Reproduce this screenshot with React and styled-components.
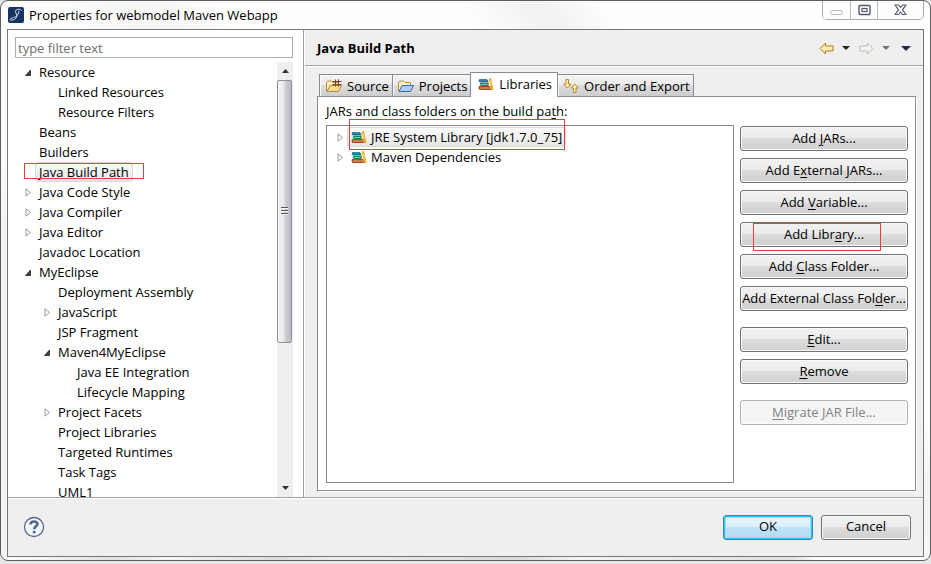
import React from "react";
import styled, { createGlobalStyle, css } from "styled-components";

const Global = createGlobalStyle`
  *, *::before, *::after { box-sizing: border-box; }
  body {
    margin: 0;
    background: #e4e6e7;
    color: #000;
    font: 13px/20px "Open Sans", "Noto Sans", sans-serif;
  }
  button, input { font: inherit; color: inherit; }
  ul { list-style: none; margin: 0; padding: 0; }
  svg { display: block; flex: none; }
  u { text-underline-offset: 2px; }
`;

const Page = styled.div`
  height: 100vh;
  min-height: 540px;
  padding-bottom: 3px;
  display: flex;
`;

const Window = styled.main`
  flex: 1;
  min-width: 0;
  display: flex;
  flex-direction: column;
  padding: 0 6px 3px;
  border: 1px solid #5f5f62;
  border-radius: 8px;
  background:
    linear-gradient(90deg, #fff, #e2e2e2 12%, #f6f6f6 18%, #dcdcdc 30%, #eee 36%, #dadada 55%, #f4f4f4 62%, #e0e0e0 85%, #fff 88%) bottom / 100% 3px no-repeat,
    linear-gradient(52deg, #f4f4f4 0 20%, #fcfcfc 24% 36%, #f7f7f7 40% 44%, #fefefe 48% 65%, #f3f3f3 70% 72%, #fefefe 76%);
`;

const TitleBar = styled.header`
  height: 28px;
  flex: none;
  display: flex;
  align-items: center;
  gap: 5px;
  padding-left: 1px;
`;

const Title = styled.h1`
  flex: 1;
  margin: 0;
  font-size: 13px;
  font-weight: 400;
`;

const WindowControls = styled.div`
  align-self: flex-start;
  height: 19px;
  display: flex;
  border: 1px solid #aaacb0;
  border-top: 0;
  border-radius: 0 0 5px 5px;
  overflow: hidden;
`;

const WindowButton = styled.button`
  width: ${(p) => (p.$wide ? 46 : 27)}px;
  padding: 0;
  border: 0;
  background: #fdfdfd;
  display: grid;
  place-items: center;
  & + & { border-left: 1px solid #b8babd; }
`;

const Client = styled.div`
  flex: 1;
  min-height: 0;
  display: flex;
  flex-direction: column;
  border: 1px solid #777;
  background: #efefef;
`;

const Columns = styled.div`
  flex: 1;
  min-height: 0;
  display: flex;
`;

const Sidebar = styled.nav`
  width: 296px;
  flex: none;
  padding: 7px 10px 0 7px;
  display: flex;
  flex-direction: column;
  gap: 4px;
  background: #fff;
  border-right: 1px solid #a0a0a0;
`;

const FilterInput = styled.input`
  width: 100%;
  height: 21px;
  padding: 0 2px;
  border: 1px solid #abadb3;
  background: #fff;
  outline: none;
  &::placeholder { color: #6d6d6d; opacity: 1; }
`;

const TreeArea = styled.div`
  flex: 1;
  min-height: 0;
  display: flex;
`;

const Tree = styled.ul`
  flex: 1;
  overflow: hidden;
`;

const TreeRow = styled.li`
  height: 20px;
  display: flex;
  align-items: center;
  padding-left: ${(p) => 8 + p.$level * 19}px;
`;

const Twisty = styled.span`
  width: 12px;
  flex: none;
  display: flex;
  padding-left: 2px;
`;

const TreeLabel = styled.span`
  position: relative;
  height: 20px;
  line-height: 18px;
  padding: 0 3px;
  border: 1px solid transparent;
  border-radius: 3px;
  white-space: nowrap;
  display: flex;
  align-items: center;
  gap: 4px;
  ${(p) => p.$selected && css`
    border-color: #d9d9d9;
    background: linear-gradient(#fafafa, #e6e6e6);
  `}
`;

const Mark = styled.span`
  position: absolute;
  border: 1px solid #f23c3c;
  pointer-events: none;
  inset: ${(p) => p.$inset};
`;

const ScrollBar = styled.div`
  width: 16px;
  display: flex;
  flex-direction: column;
  align-items: center;
  background: #efefef;
`;

const ScrollButton = styled.button`
  width: 16px;
  height: 18px;
  flex: none;
  padding: 0;
  border: 0;
  background: transparent;
  display: grid;
  place-items: center;
`;

const ScrollTrack = styled.div`
  flex: 1;
  width: 100%;
`;

const ScrollThumb = styled.div`
  width: 15px;
  height: 66%;
  display: grid;
  place-items: center;
  border: 1px solid #8e8f93;
  border-radius: 2px;
  background: linear-gradient(90deg, #f5f5f5, #e8e8ea 45%, #cbcbd0 60%, #bdbec4);
`;

const Content = styled.section`
  flex: 1;
  min-width: 0;
  display: flex;
  flex-direction: column;
  border-left: 1px solid #fff;
`;

const ContentHeader = styled.div`
  height: 36px;
  flex: none;
  display: flex;
  align-items: center;
  justify-content: space-between;
  padding: 1px 9px 0 12px;
  border-bottom: 1px solid #a0a0a0;
  box-shadow: 0 1px #fff;
`;

const Heading = styled.h2`
  margin: 0;
  font-size: 13px;
  font-weight: 700;
`;

const NavTools = styled.div`
  display: flex;
  align-items: center;
`;

const ToolButton = styled.button`
  width: ${(p) => (p.$narrow ? 24 : 16)}px;
  height: 20px;
  padding: 0;
  border: 0;
  background: none;
  display: grid;
  place-items: center;
`;

const ContentBody = styled.div`
  flex: 1;
  min-height: 0;
  display: flex;
  flex-direction: column;
  padding: 6px 7px 6px 12px;
`;

const TabList = styled.div`
  display: flex;
  align-items: flex-end;
  padding-left: 2px;
`;

const Tab = styled.button`
  height: 22px;
  padding: 0 3px 0 6px;
  display: flex;
  align-items: center;
  gap: 5px;
  white-space: nowrap;
  border: 1px solid #898c95;
  border-bottom: 0;
  background: linear-gradient(#f3f3f3, #ebebeb 50%, #dddddd 50%, #cdcdcd);
  box-shadow: inset 1px 1px #fbfbfb;
  & + & { border-left: 0; padding-left: 5px; }
  ${(p) => p.$active && css`
    height: 25px;
    margin-bottom: -1px;
    position: relative;
    background: #fff;
    && {
      padding: 0 5px 2px 7px;
      border-left: 1px solid #898c95;
      margin-left: -1px;
    }
  `}
`;

const TabPanel = styled.div`
  flex: 1;
  min-height: 0;
  display: grid;
  grid-template: 28px minmax(0, 1fr) / minmax(0, 1fr) 168px;
  column-gap: 6px;
  padding: 0 7px 7px 8px;
  border: 1px solid #898c95;
  background: #fff;
  box-shadow: 1px 1px #fff;
`;

const PanelCaption = styled.div`
  grid-column: 1 / -1;
  padding-top: 4px;
`;

const EntryTree = styled.ul`
  padding-top: 1px;
  border: 1px solid #828790;
`;

const EntryRow = styled.li`
  height: 20px;
  display: flex;
  align-items: center;
  padding-left: 8px;
`;

const ActionColumn = styled.div`
  display: flex;
  flex-direction: column;
  gap: 16px;
  padding-top: 1px;
`;

const ActionGroup = styled.div`
  display: flex;
  flex-direction: column;
  gap: 7px;
`;

const PushButton = styled.button`
  position: relative;
  height: 25px;
  padding: 0 0 2px;
  white-space: nowrap;
  border: 1px solid #707070;
  border-radius: 3px;
  background: linear-gradient(#f2f2f2, #ebebeb 50%, #dddddd 50%, #cfcfcf);
  box-shadow: inset 0 0 0 1px #fafafa;
  &:disabled {
    color: #838383;
    border-color: #adb2b5;
    background: #f4f4f4;
  }
  ${(p) => p.$primary && css`
    border-color: #3c7fb1;
    background: linear-gradient(#e9f5fc, #d9effb 50%, #c0e3f8 50%, #b0dbf5);
    box-shadow: inset 0 0 0 1px #2cc9fa, inset 0 0 0 2px #8fe0fb;
  `}
`;

const Footer = styled.footer`
  height: 59px;
  flex: none;
  display: flex;
  align-items: center;
  justify-content: space-between;
  padding: 0 12px 0 15px;
  border-top: 1px solid #a0a0a0;
  box-shadow: inset 0 1px #fff;
`;

const HelpButton = styled.button`
  padding: 0;
  border: 0;
  background: none;
`;

const DialogActions = styled.div`
  display: grid;
  grid-template-columns: 90px 90px;
  gap: 8px;
`;

const AppIcon = () => (
  <svg width="16" height="16" viewBox="0 0 16 16">
    <rect width="16" height="16" rx="2" fill="#17335f" />
    <path d="M13.500 3.500C12 1.500 7.500 2 7.500 4.500C7.500 6.500 9.500 7.500 8.500 10C7.500 13 3 14 2 12.500C2 11 6 11.500 9 8.500C11 6.500 11.500 4.500 10 4" fill="none" stroke="#cfe0f5" strokeWidth="1" />
  </svg>
);

const TwistyIcon = ({ open }) => (
  <svg width="7" height="9" viewBox="0 0 7 9">
    {open
      ? <path d="M5.500 2V7.500H.5Z" fill="#404040" stroke="#222" strokeWidth=".8" />
      : <path d="M1 .8V8.200L5.500 4.500Z" fill="#fff" stroke="#989898" />}
  </svg>
);

const BooksIcon = () => (
  <svg width="16" height="16" viewBox="0 0 16 16">
    <path d="M11 2.500L13 2L15.500 14H13Z" fill="#f5a81c" />
    <path d="M11.500 3L9.500 12" fill="none" stroke="#f2b23a" />
    <path d="M12.300 4.500L13.300 9" stroke="#fbe08a" />
    <path d="M1.500 3H8.500L10 4.500V6.500H2L.5 5Z" fill="#14708f" />
    <path d="M2 4H8.500" stroke="#41a9bd" />
    <path d="M2.500 7H10.500V10H3L1.500 8.500Z" fill="#128462" />
    <path d="M3 8.500H9.500" stroke="#79cfa5" />
    <path d="M1 10H12L13 14H1.500L.5 12Z" fill="#a64b20" />
    <path d="M2 12H12" stroke="#eab47d" />
  </svg>
);

const FolderIcon = ({ front, line, back, grid }) => (
  <svg width="16" height="16" viewBox="0 0 16 16">
    <path d="M.5 13V4.500L2 3H5.500L7 4.500H12.500V7.500" fill={back} stroke="#bb8a35" />
    <path d="M1 13.500L4 7.500H15.500L12.500 13.500Z" fill={front} stroke={line} />
    {grid && <path d="M6.500 3.500H15.500M6.500 6.500H15.500M9.500 1.500V8.500M12.500 1.500V8.500" stroke="#7c4328" />}
  </svg>
);

const OrderIcon = () => (
  <svg width="16" height="16" viewBox="0 0 16 16" fill="#fdeeb5" stroke="#bd861f">
    <path d="M3 1.500H5.500V6H8L4.300 10L.6 6H3Z" />
    <path d="M10.500 14.500H13V10H15.400L11.700 6L8 10H10.500Z" />
  </svg>
);

const ArrowIcon = ({ forward }) => (
  <svg width="15" height="13" viewBox="0 0 15 13">
    <path
      d={forward
        ? "M14 6.500L8.500 1V4H1V9H8.500V12Z"
        : "M1 6.500L6.500 1V4H14V9H6.500V12Z"}
      fill={forward ? "#f4f4f1" : "#fdedb0"}
      stroke={forward ? "#bcbcb5" : "#b87a16"}
    />
  </svg>
);

const CaretIcon = ({ color, wide }) => (
  <svg width={wide ? 10 : 8} height={wide ? 5 : 4} viewBox="0 0 8 4">
    <path d="M0 0H8L4 4Z" fill={color} />
  </svg>
);

const ScrollArrow = ({ up }) => (
  <svg width="7" height="4" viewBox="0 0 7 4">
    <path d={up ? "M0 4L3.500 0L7 4Z" : "M0 0H7L3.500 4Z"} fill="#333" />
  </svg>
);

const GripIcon = () => (
  <svg width="7" height="9" viewBox="0 0 7 9">
    <path d="M0 .5H7M0 3.500H7M0 6.500H7" stroke="#55565a" />
    <path d="M0 1.500H7M0 4.500H7M0 7.500H7" stroke="#f4f4f4" />
  </svg>
);

const HelpIcon = () => (
  <svg width="22" height="22" viewBox="0 0 22 22" fill="none" stroke="#566a8e">
    <circle cx="11" cy="11" r="9.500" fill="#f5f6f8" strokeWidth="1.300" />
    <path d="M7.500 8.500C7.500 4.500 14.500 4.500 14.500 8C14.500 10.300 11.200 10.400 11.200 13.200" strokeWidth="2.600" />
    <path d="M11.200 14.800V17.300" strokeWidth="2.800" />
  </svg>
);

const MinimizeIcon = () => (
  <svg width="13" height="13" viewBox="0 0 13 13">
    <rect x="1" y="6.500" width="11" height="4" rx="1" fill="#fff" stroke="#bbb" />
  </svg>
);

const MaximizeIcon = () => (
  <svg width="13" height="12" viewBox="0 0 13 12" fill="#fff" stroke="#53566b">
    <rect x="1" y="1.500" width="11" height="9" rx="1" strokeWidth="1.400" />
    <rect x="4" y="4.500" width="5" height="3" strokeWidth="1.200" />
  </svg>
);

const CloseIcon = () => (
  <svg width="13" height="12" viewBox="0 0 13 12">
    <path d="M1 1H4.500L6.500 3.500L8.500 1H12L8.500 5.800L12 10.500H8.500L6.500 8L4.500 10.500H1L4.500 5.800Z" fill="#fff" stroke="#53566b" strokeWidth="1.200" strokeLinejoin="round" />
  </svg>
);

const pages = [
  { label: "Resource", level: 0, open: true },
  { label: "Linked Resources", level: 1 },
  { label: "Resource Filters", level: 1 },
  { label: "Beans", level: 0 },
  { label: "Builders", level: 0 },
  { label: "Java Build Path", level: 0, selected: true },
  { label: "Java Code Style", level: 0, open: false },
  { label: "Java Compiler", level: 0, open: false },
  { label: "Java Editor", level: 0, open: false },
  { label: "Javadoc Location", level: 0 },
  { label: "MyEclipse", level: 0, open: true },
  { label: "Deployment Assembly", level: 1 },
  { label: "JavaScript", level: 1, open: false },
  { label: "JSP Fragment", level: 1 },
  { label: "Maven4MyEclipse", level: 1, open: true },
  { label: "Java EE Integration", level: 2 },
  { label: "Lifecycle Mapping", level: 2 },
  { label: "Project Facets", level: 1, open: false },
  { label: "Project Libraries", level: 1 },
  { label: "Targeted Runtimes", level: 1 },
  { label: "Task Tags", level: 1 },
  { label: "UML1", level: 1 },
];

const tabs = [
  { label: "Source", icon: <FolderIcon front="#fbdc8c" line="#bb8a35" back="#fdf0c4" grid /> },
  { label: "Projects", icon: <FolderIcon front="#a9cdf5" line="#3a68ae" back="#fdf0c4" /> },
  { label: "Libraries", icon: <BooksIcon />, active: true },
  { label: "Order and Export", icon: <OrderIcon /> },
];

const entries = [
  { label: "JRE System Library [jdk1.7.0_75]", selected: true },
  { label: "Maven Dependencies" },
];

const actionGroups = [
  [
    { text: ["Add ", "J", "ARs..."] },
    { text: ["Add E", "x", "ternal JARs..."] },
    { text: ["Add ", "V", "ariable..."] },
    { text: ["Add Libr", "a", "ry..."], marked: true },
    { text: ["Add ", "C", "lass Folder..."] },
    { text: ["Add External Class Fol", "d", "er..."] },
  ],
  [
    { text: ["", "E", "dit..."] },
    { text: ["", "R", "emove"] },
  ],
  [{ text: ["", "M", "igrate JAR File..."], disabled: true }],
];

export default function App() {
  return (
    <Page>
      <Global />
      <Window>
        <TitleBar>
          <AppIcon />
          <Title>Properties for webmodel Maven Webapp</Title>
          <WindowControls>
            <WindowButton aria-label="Minimize"><MinimizeIcon /></WindowButton>
            <WindowButton aria-label="Maximize"><MaximizeIcon /></WindowButton>
            <WindowButton aria-label="Close" $wide><CloseIcon /></WindowButton>
          </WindowControls>
        </TitleBar>
        <Client>
          <Columns>
            <Sidebar>
              <FilterInput type="text" aria-label="Filter" placeholder="type filter text" />
              <TreeArea>
                <Tree role="tree" aria-label="Property pages">
                  {pages.map((p) => (
                    <TreeRow key={p.label} role="treeitem" aria-level={p.level + 1} aria-expanded={p.open} aria-selected={!!p.selected} $level={p.level}>
                      <Twisty>{p.open !== undefined && <TwistyIcon open={p.open} />}</Twisty>
                      <TreeLabel $selected={p.selected}>
                        {p.label}
                        {p.selected && <Mark $inset="0 -12px 2px -12px" />}
                      </TreeLabel>
                    </TreeRow>
                  ))}
                </Tree>
                <ScrollBar>
                  <ScrollButton aria-label="Scroll up"><ScrollArrow up /></ScrollButton>
                  <ScrollTrack><ScrollThumb><GripIcon /></ScrollThumb></ScrollTrack>
                  <ScrollButton aria-label="Scroll down"><ScrollArrow /></ScrollButton>
                </ScrollBar>
              </TreeArea>
            </Sidebar>
            <Content>
              <ContentHeader>
                <Heading>Java Build Path</Heading>
                <NavTools>
                  <ToolButton aria-label="Back"><ArrowIcon /></ToolButton>
                  <ToolButton aria-label="Back history" $narrow><CaretIcon color="#222" /></ToolButton>
                  <ToolButton aria-label="Forward"><ArrowIcon forward /></ToolButton>
                  <ToolButton aria-label="Forward history" $narrow><CaretIcon color="#777" /></ToolButton>
                  <ToolButton aria-label="Menu"><CaretIcon color="#2c2350" wide /></ToolButton>
                </NavTools>
              </ContentHeader>
              <ContentBody>
                <TabList role="tablist">
                  {tabs.map((t) => (
                    <Tab key={t.label} role="tab" aria-selected={!!t.active} $active={t.active}>
                      {t.icon}
                      {t.label}
                    </Tab>
                  ))}
                </TabList>
                <TabPanel role="tabpanel">
                  <PanelCaption id="entries-caption">JARs and class folders on the build pa<u>t</u>h:</PanelCaption>
                  <EntryTree role="tree" aria-labelledby="entries-caption">
                    {entries.map((e) => (
                      <EntryRow key={e.label} role="treeitem" aria-expanded={false} aria-selected={!!e.selected}>
                        <Twisty><TwistyIcon open={false} /></Twisty>
                        <TreeLabel $selected={e.selected}>
                          <BooksIcon />
                          {e.label}
                          {e.selected && <Mark $inset="-9px 0 -4px 1px" />}
                        </TreeLabel>
                      </EntryRow>
                    ))}
                  </EntryTree>
                  <ActionColumn>
                    {actionGroups.map((group, i) => (
                      <ActionGroup key={i}>
                        {group.map((a) => (
                          <PushButton key={a.text.join("")} disabled={a.disabled}>
                            {a.text[0]}<u>{a.text[1]}</u>{a.text[2]}
                            {a.marked && <Mark $inset="0 26px -5px 12px" />}
                          </PushButton>
                        ))}
                      </ActionGroup>
                    ))}
                  </ActionColumn>
                </TabPanel>
              </ContentBody>
            </Content>
          </Columns>
          <Footer>
            <HelpButton aria-label="Help"><HelpIcon /></HelpButton>
            <DialogActions>
              <PushButton $primary>OK</PushButton>
              <PushButton>Cancel</PushButton>
            </DialogActions>
          </Footer>
        </Client>
      </Window>
    </Page>
  );
}
